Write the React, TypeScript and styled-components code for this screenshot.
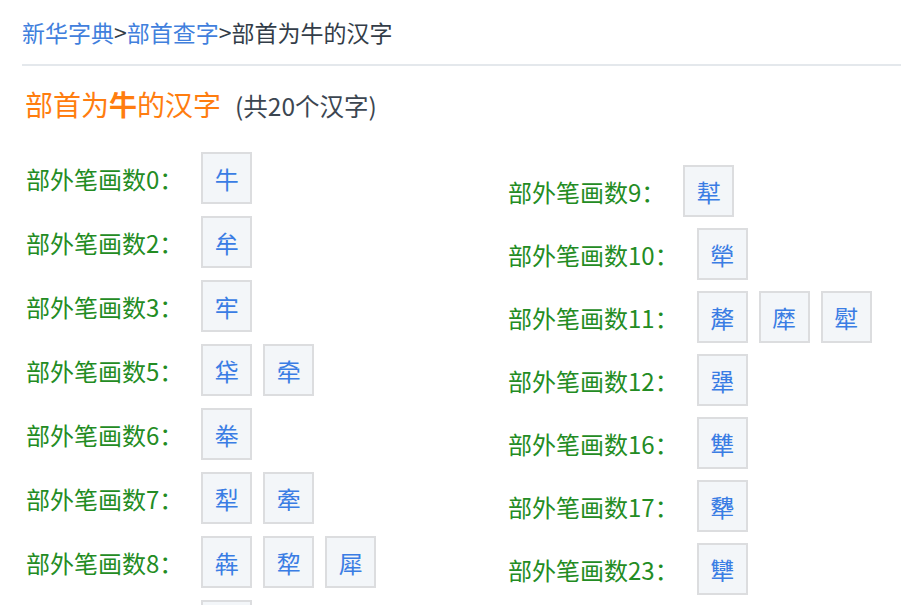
import React from "react";
import styled, { createGlobalStyle } from "styled-components";

const Global = createGlobalStyle`
  html, body { margin: 0; padding: 0; background: #fff; overflow: hidden; }
  body { font-family: "Noto Sans CJK SC", "Noto Sans", sans-serif; }
`;

const Page = styled.div`
  padding-left: 22px;
  width: 1000px;
`;

const Crumbs = styled.nav`
  padding-top: 15px;
  padding-bottom: 14px;
  font-size: 23px;
  line-height: 35px;
  color: #333d48;
  border-bottom: 2px solid #e4e8ec;
`;

const CrumbLink = styled.a`
  color: #4180dd;
  text-decoration: none;
`;

const Title = styled.h1`
  margin: 18px 0 0 3px;
  font-size: 28px;
  line-height: 40px;
  font-weight: normal;
  color: #ff7d0f;
`;

const Strong = styled.b`
  font-weight: bold;
`;

const Count = styled.span`
  margin-left: 14px;
  font-size: 24.5px;
  color: #3c4651;
`;

const Columns = styled.div`
  display: grid;
  grid-template-columns: 482px 482px;
  margin: 26px 0 0 4px;
`;

const Column = styled.div<{ $offset: number }>`
  display: flex;
  flex-direction: column;
  padding-top: ${(p) => p.$offset}px;
`;

const Row = styled.div<{ $gap: number }>`
  display: flex;
  align-items: center;
  margin-bottom: ${(p) => p.$gap}px;
`;

const Label = styled.span`
  font-size: 24px;
  color: #238c23;
  margin-right: 18px;
  white-space: nowrap;
`;

const Box = styled.a`
  display: flex;
  align-items: center;
  justify-content: center;
  box-sizing: border-box;
  width: 51px;
  height: 52px;
  margin-right: 11px;
  border: 2px solid #dcdddf;
  background: #f3f6f9;
  color: #3a7de4;
  font-size: 24px;
  text-decoration: none;
`;

type Group = { n: number; chars: string[] };

const left: Group[] = [
  { n: 0, chars: ["牛"] },
  { n: 2, chars: ["牟"] },
  { n: 3, chars: ["牢"] },
  { n: 5, chars: ["牮", "牵"] },
  { n: 6, chars: ["牶"] },
  { n: 7, chars: ["犁", "牽"] },
  { n: 8, chars: ["犇", "犂", "犀"] },
  { n: 8, chars: ["犉"] },
];

const right: Group[] = [
  { n: 9, chars: ["犎"] },
  { n: 10, chars: ["犖"] },
  { n: 11, chars: ["犛", "犘", "犚"] },
  { n: 12, chars: ["犟"] },
  { n: 16, chars: ["犨"] },
  { n: 17, chars: ["犩"] },
  { n: 23, chars: ["犫"] },
];

function List({ groups, gap }: { groups: Group[]; gap: number }) {
  return (
    <>
      {groups.map((g, i) => (
        <Row key={i} $gap={gap}>
          <Label>部外笔画数{g.n}：</Label>
          {g.chars.map((c) => (
            <Box key={c} href="#">
              {c}
            </Box>
          ))}
        </Row>
      ))}
    </>
  );
}

export default function App() {
  return (
    <Page>
      <Global />
      <Crumbs>
        <CrumbLink href="#">新华字典</CrumbLink>&gt;
        <CrumbLink href="#">部首查字</CrumbLink>&gt;部首为牛的汉字
      </Crumbs>
      <Title>
        部首为<Strong>牛</Strong>的汉字
        <Count>(共20个汉字)</Count>
      </Title>
      <Columns>
        <Column $offset={0}>
          <List groups={left} gap={12} />
        </Column>
        <Column $offset={13}>
          <List groups={right} gap={11} />
        </Column>
      </Columns>
    </Page>
  );
}
